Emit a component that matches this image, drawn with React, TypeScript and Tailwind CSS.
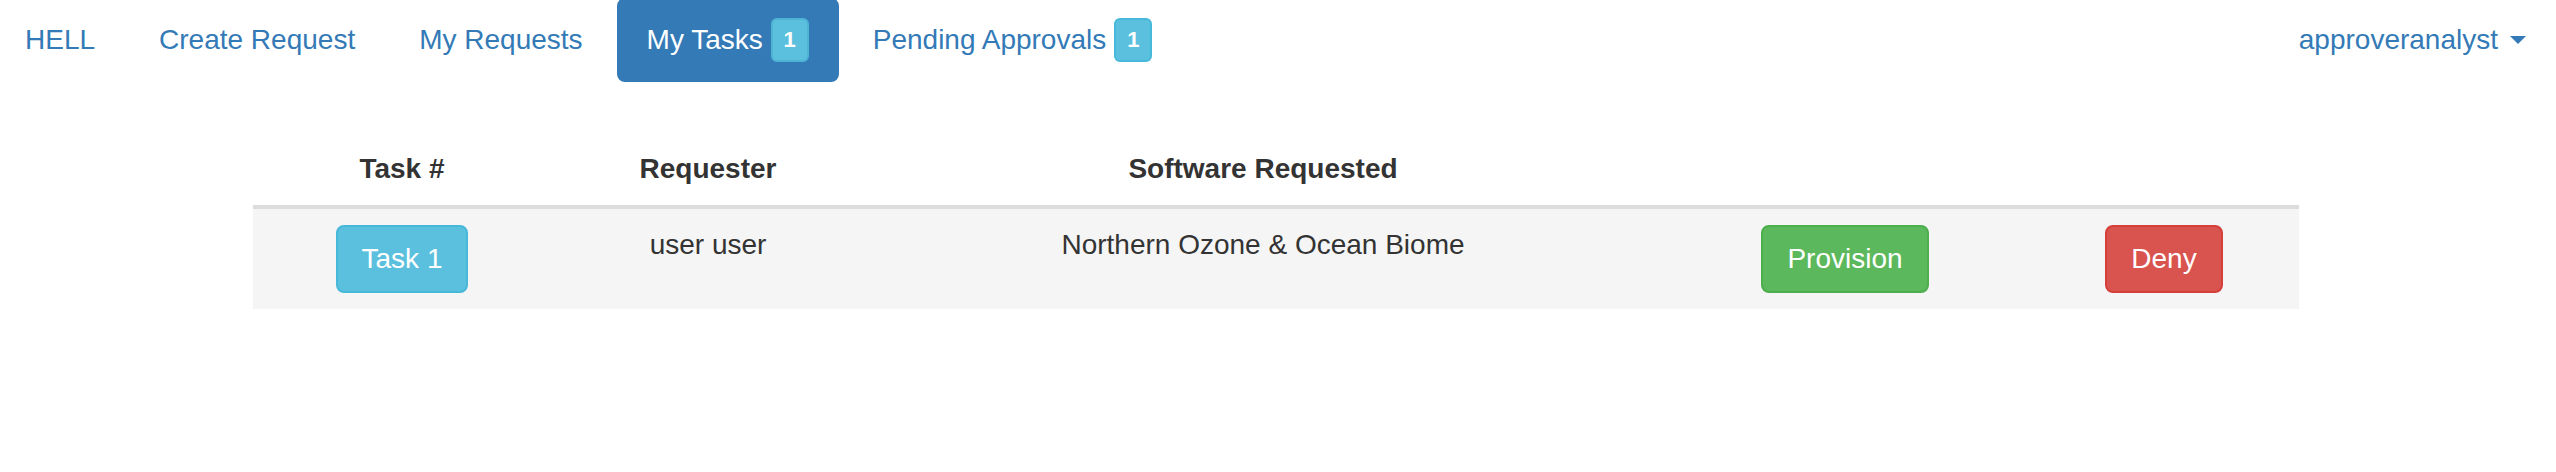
import React from 'react';

// ============================================================================
// Types
// ============================================================================

interface NavItem {
  label: string;
  badge?: number;
  active?: boolean;
}

interface TaskRow {
  id: number;
  requester: string;
  software: string;
}

// ============================================================================
// Data
// ============================================================================

const navItems: NavItem[] = [
  { label: 'Create Request' },
  { label: 'My Requests' },
  { label: 'My Tasks', badge: 1, active: true },
  { label: 'Pending Approvals', badge: 1 },
];

const tasks: TaskRow[] = [
  { id: 1, requester: 'user user', software: 'Northern Ozone & Ocean Biome' },
];

// ============================================================================
// Components
// ============================================================================

function Badge({ count, active }: { count: number; active?: boolean }) {
  return (
    <span
      className={
        'ml-[8px] inline-flex h-[44px] w-[38px] items-center justify-center rounded-[6px] border-2 bg-[#5bc0de] text-[22px] font-bold leading-none text-white ' +
        (active ? 'border-[#4fb3d4]' : 'border-[#46b8da]')
      }
    >
      {count}
    </span>
  );
}

function NavBar() {
  return (
    <nav className="-mt-[2px] flex h-[84px] items-stretch text-[28px] leading-[40px] text-[#337ab7]">
      {/* Brand */}
      <a className="flex items-center pl-[25px] pr-[30px]">HELL</a>

      {/* Pills */}
      <ul className="flex items-stretch">
        {navItems.map((item) => (
          <li key={item.label} className="ml-[4px] flex">
            <a
              className={
                'flex items-center rounded-[8px] px-[30px] ' +
                (item.active ? 'bg-[#337ab7] text-white' : 'text-[#337ab7]')
              }
            >
              <span>{item.label}</span>
              {item.badge !== undefined && <Badge count={item.badge} active={item.active} />}
            </a>
          </li>
        ))}
      </ul>

      {/* User dropdown */}
      <a className="ml-auto flex items-center pl-[30px] pr-[30px]">
        <span>approveranalyst</span>
        <span className="ml-[12px] inline-block h-0 w-0 border-x-[8px] border-t-[8px] border-x-transparent border-t-[#337ab7]" />
      </a>
    </nav>
  );
}

function TaskTable() {
  return (
    <table className="mt-[51px] ml-[253px] w-[2046px] table-fixed border-collapse text-[28px] leading-[40px] text-[#333]">
      <colgroup>
        <col className="w-[298px]" />
        <col className="w-[314px]" />
        <col className="w-[796px]" />
        <col className="w-[368px]" />
        <col className="w-[270px]" />
      </colgroup>
      <thead>
        <tr className="border-b-[4px] border-[#ddd]">
          <th className="p-[16px] text-center align-bottom font-bold">Task #</th>
          <th className="p-[16px] text-center align-bottom font-bold">Requester</th>
          <th className="p-[16px] text-center align-bottom font-bold">Software Requested</th>
          <th className="p-[16px]" />
          <th className="p-[16px]" />
        </tr>
      </thead>
      <tbody>
        {tasks.map((task) => (
          <tr key={task.id} className="bg-[#f5f5f5]">
            <td className="p-[16px] text-center align-top">
              <button className="rounded-[8px] border-2 border-[#46b8da] bg-[#5bc0de] px-[24px] py-[12px] leading-[40px] text-white">
                Task {task.id}
              </button>
            </td>
            <td className="p-[16px] text-center align-top">{task.requester}</td>
            <td className="p-[16px] text-center align-top">{task.software}</td>
            <td className="p-[16px] text-center align-top">
              <button className="rounded-[8px] border-2 border-[#4cae4c] bg-[#5cb85c] px-[24px] py-[12px] leading-[40px] text-white">
                Provision
              </button>
            </td>
            <td className="p-[16px] text-center align-top">
              <button className="rounded-[8px] border-2 border-[#d43f3a] bg-[#d9534f] px-[24px] py-[12px] leading-[40px] text-white">
                Deny
              </button>
            </td>
          </tr>
        ))}
      </tbody>
    </table>
  );
}

export default function App() {
  return (
    <div className="h-[472px] w-[2556px] overflow-hidden bg-white font-['Liberation_Sans',Arial,sans-serif]">
      <NavBar />
      <TaskTable />
    </div>
  );
}
